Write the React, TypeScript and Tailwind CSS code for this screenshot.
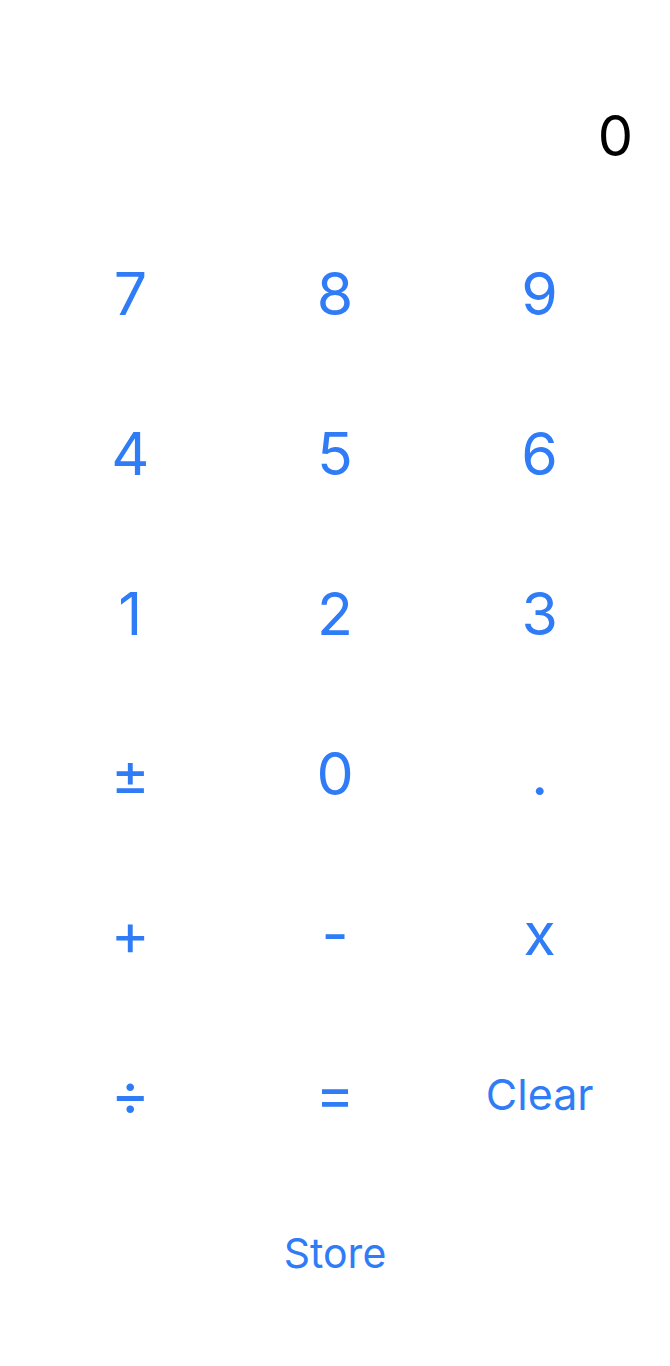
import React from "react"

const keys = ["7", "8", "9", "4", "5", "6", "1", "2", "3", "±", "0", ".", "+", "-", "x", "÷", "=", "Clear"]

export default function App() {
  return (
    <div className="w-[670px] h-[1366px] bg-white" style={{ fontFamily: "Inter, 'Liberation Sans', sans-serif" }}>
      {/* display */}
      <div className="h-[214px] pt-[100px] pr-[37px] text-right">
        <span className="text-[56px] leading-[72px] text-black">0</span>
      </div>

      {/* keypad */}
      <div className="grid grid-cols-3 px-[28px]">
        {keys.map((k) => (
          <button
            key={k}
            className={`h-[160px] flex items-center justify-center text-[#2f7cf6] ${k === "Clear" ? "text-[43px]" : "text-[59px]"}`}
          >
            {k}
          </button>
        ))}
      </div>

      <div className="flex justify-center">
        <button className="h-[160px] px-6 flex items-center justify-center text-[41px] text-[#2f7cf6]">Store</button>
      </div>
    </div>
  )
}
